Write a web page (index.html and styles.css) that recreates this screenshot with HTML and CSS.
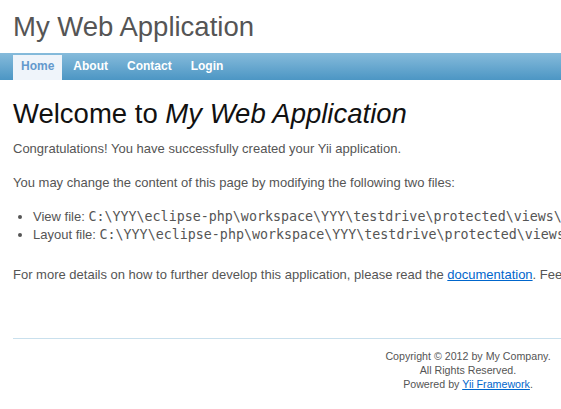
FILE: index.html
```html
<!DOCTYPE html>
<html lang="en">

<head>
    <meta charset="UTF-8">
    <meta name="viewport" content="width=device-width, initial-scale=1.0">
    <title>My Web Application</title>
    <link rel="stylesheet" href="styles.css">
</head>

<body>
    <div class="page">
        <div class="header">
            <div class="logo">My Web Application</div>
        </div>

        <div class="mainmenu">
            <ul>
                <li class="active"><a href="#">Home</a></li>
                <li><a href="#">About</a></li>
                <li><a href="#">Contact</a></li>
                <li><a href="#">Login</a></li>
            </ul>
        </div>

        <div class="content">
            <h1>Welcome to <i>My Web Application</i></h1>

            <p>Congratulations! You have successfully created your Yii application.</p>

            <p>You may change the content of this page by modifying the following two files:</p>
            <ul class="file-list">
                <li>View file: <code>C:\YYY\eclipse-php\workspace\YYY\testdrive\protected\views\site\index.php</code></li>
                <li>Layout file: <code>C:\YYY\eclipse-php\workspace\YYY\testdrive\protected\views\layouts\main.php</code></li>
            </ul>

            <p>For more details on how to further develop this application, please read the <a href="#">documentation</a>. Feel free to ask in the <a href="#">forum</a>, should you have any questions.</p>
        </div>

        <div class="footer">
            Copyright &copy; 2012 by My Company.<br>
            All Rights Reserved.<br>
            Powered by <a href="#">Yii Framework</a>.
        </div>
    </div>
</body>

</html>
```

FILE: styles.css
```css
html,
body {
    overflow: hidden;
}

body {
    margin: 0;
    padding: 0;
    color: #555;
    font: normal 13px "Liberation Sans", Arial, Helvetica, sans-serif;
    background: #fff;
}

a {
    color: #06c;
}

.page {
    width: 936px;
}

.logo {
    padding: 11px 13px 10px;
    font-size: 27.5px;
    line-height: 32px;
    color: #555;
}

/* top navigation bar */
.mainmenu {
    background: linear-gradient(#86bbdb, #4c96c4);
    padding: 2px 13px 0;
}

.mainmenu ul {
    display: flex;
    gap: 3px;
    list-style: none;
    margin: 0;
    padding: 0;
}

.mainmenu li a {
    display: block;
    color: #fff;
    font-size: 12px;
    font-weight: bold;
    line-height: 15px;
    text-decoration: none;
    padding: 4px 8px 6px;
}

.mainmenu li.active a {
    color: #6399cd;
    background-color: #eff4fa;
}

.content {
    padding: 20px 13px 28px;
    line-height: 18px;
}

.content h1 {
    margin: 0 0 12px;
    font-size: 27.5px;
    font-weight: normal;
    line-height: 1;
    color: #111;
    white-space: nowrap;
}

.content p {
    margin: 0 0 16px;
    white-space: nowrap;
}

.file-list {
    margin: 0 0 22px;
    padding-left: 20px;
    white-space: nowrap;
}

.file-list code {
    font-family: "DejaVu Sans Mono", Consolas, monospace;
    font-size: 13.33px;
}

.footer {
    margin: 10px 13px 0;
    padding: 10px;
    border-top: 1px solid #c9e0ed;
    font-size: 10.67px;
    line-height: 14px;
    text-align: center;
}
```
